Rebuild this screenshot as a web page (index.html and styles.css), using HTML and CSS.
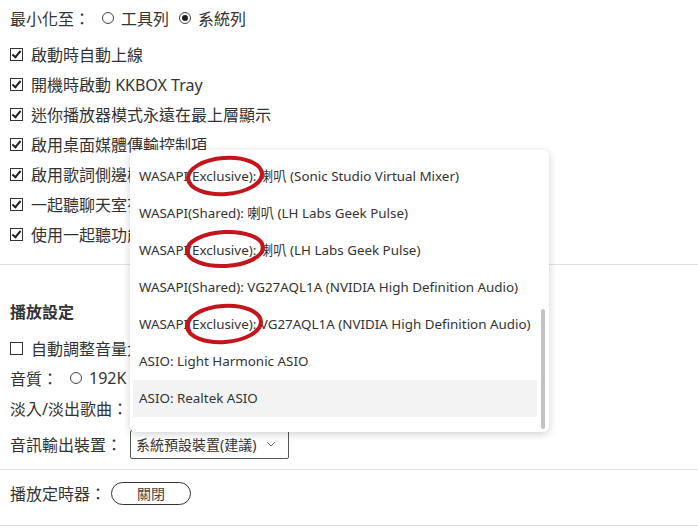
FILE: index.html
```html
<!DOCTYPE html>
<html lang="zh-Hant">
<head>
  <meta charset="UTF-8"/>
  <meta name="viewport" content="width=device-width, initial-scale=1.0"/>
  <title>設定</title>
  <link rel="stylesheet" href="styles.css">
</head>
<body>
  <div class="settings">
    <div class="section">
      <div class="row first">
        <span>最小化至：</span>
        <label class="radio"><span class="circle"></span>工具列</label>
        <label class="radio"><span class="circle on"></span>系統列</label>
      </div>
      <div class="row"><span class="box checked"></span>啟動時自動上線</div>
      <div class="row"><span class="box checked"></span>開機時啟動 KKBOX Tray</div>
      <div class="row"><span class="box checked"></span>迷你播放器模式永遠在最上層顯示</div>
      <div class="row"><span class="box checked"></span>啟用桌面媒體傳輸控制項</div>
      <div class="row"><span class="box checked"></span>啟用歌詞側邊欄</div>
      <div class="row"><span class="box checked"></span>一起聽聊天室有新訊息時通知</div>
      <div class="row"><span class="box checked"></span>使用一起聽功能</div>
    </div>

    <div class="section play">
      <h3>播放設定</h3>
      <div class="row"><span class="box"></span>自動調整音量大小</div>
      <div class="row">
        <span>音質：</span>
        <label class="radio"><span class="circle"></span>192K</label>
      </div>
      <div class="row"><span>淡入/淡出歌曲：</span></div>
      <div class="row device">
        <span>音訊輸出裝置：</span>
        <div class="select">
          <span>系統預設裝置(建議)</span>
          <svg width="10" height="6" viewBox="0 0 10 6"><path d="M1 1 L5 5 L9 1" fill="none" stroke="#666" stroke-width="1"/></svg>
        </div>
      </div>
    </div>

    <div class="section timer">
      <div class="row">
        <span>播放定時器：</span>
        <button class="pill">關閉</button>
      </div>
    </div>
  </div>

  <div class="dropdown">
    <div class="item">WASAPI(Exclusive): 喇叭 (Sonic Studio Virtual Mixer)</div>
    <div class="item">WASAPI(Shared): 喇叭 (LH Labs Geek Pulse)</div>
    <div class="item">WASAPI(Exclusive): 喇叭 (LH Labs Geek Pulse)</div>
    <div class="item">WASAPI(Shared): VG27AQL1A (NVIDIA High Definition Audio)</div>
    <div class="item">WASAPI(Exclusive): VG27AQL1A (NVIDIA High Definition Audio)</div>
    <div class="item">ASIO: Light Harmonic ASIO</div>
    <div class="item hover">ASIO: Realtek ASIO</div>
    <div class="scrollbar"></div>
  </div>

  <svg class="marks" width="698" height="528" viewBox="0 0 698 528">
    <ellipse cx="225" cy="176" rx="37" ry="18" transform="rotate(-4 225 176)"/>
    <ellipse cx="225" cy="249" rx="38" ry="17" transform="rotate(-3 225 249)"/>
    <ellipse cx="224" cy="324" rx="37" ry="18" transform="rotate(-4 224 324)"/>
  </svg>
</body>
</html>
```

FILE: styles.css
```css
body {
  margin: 0;
  font-family: "Noto Sans", "Noto Sans CJK TC", sans-serif;
  font-size: 16px;
  color: #333;
  background: #fff;
  width: 698px;
  height: 528px;
  overflow: hidden;
}

.settings {
  padding-top: 3px;
}

.section {
  border-bottom: 1px solid #e2e2e2;
  padding-left: 10px;
}

.row {
  display: flex;
  align-items: center;
  height: 30px;
  white-space: nowrap;
}

.row.first {
  margin-bottom: 6px;
}

.section:first-child {
  padding-bottom: 15px;
}

.box {
  width: 11px;
  height: 11px;
  border: 1px solid #333;
  margin-right: 8px;
  position: relative;
}

.box.checked::after {
  content: "";
  position: absolute;
  left: 3px;
  top: 0px;
  width: 3px;
  height: 7px;
  border: solid #222;
  border-width: 0 2px 2px 0;
  transform: rotate(40deg);
}

.radio {
  display: flex;
  align-items: center;
  margin-left: 12px;
}

.radio + .radio {
  margin-left: 10px;
}

.circle {
  width: 10px;
  height: 10px;
  border: 1px solid #444;
  border-radius: 50%;
  margin-right: 7px;
  position: relative;
}

.circle.on::after {
  content: "";
  position: absolute;
  left: 2px;
  top: 2px;
  width: 6px;
  height: 6px;
  border-radius: 50%;
  background: #222;
}

.play {
  padding-top: 32px;
  padding-bottom: 4px;
}

h3 {
  margin: 0 0 6px;
  font-size: 16px;
  font-weight: bold;
  height: 30px;
  line-height: 30px;
}

.row.device {
  height: 42px;
}

.select {
  display: flex;
  align-items: center;
  gap: 10px;
  height: 27px;
  margin-left: 8px;
  padding: 0 12px 0 5px;
  border: 1px solid #555;
  border-radius: 2px;
  font-size: 14px;
}

.timer {
  padding-top: 8px;
  padding-bottom: 17px;
  border-bottom-color: #ddd;
}

.pill {
  width: 80px;
  height: 23px;
  margin-left: 5px;
  border: 1px solid #333;
  border-radius: 12px;
  background: #fff;
  font-family: inherit;
  font-size: 14px;
  color: #444;
  padding: 0;
}

.dropdown {
  position: absolute;
  left: 130px;
  top: 150px;
  width: 419px;
  height: 282px;
  padding-top: 8px;
  box-sizing: border-box;
  background: #fff;
  border-radius: 6px;
  box-shadow: 0 2px 8px rgba(0, 0, 0, 0.18);
  font-size: 13.4px;
  color: #333;
}

.item {
  height: 37px;
  line-height: 37px;
  margin: 0 12px 0 3px;
  padding-left: 6px;
  white-space: nowrap;
}

.item.hover {
  background: #f3f3f3;
}

.scrollbar {
  position: absolute;
  right: 4px;
  top: 159px;
  width: 4px;
  height: 120px;
  border-radius: 2px;
  background: #c2c2c2;
}

.marks {
  position: absolute;
  left: 0;
  top: 0;
  pointer-events: none;
}

.marks ellipse {
  fill: none;
  stroke: #c4141c;
  stroke-width: 4;
}
```
